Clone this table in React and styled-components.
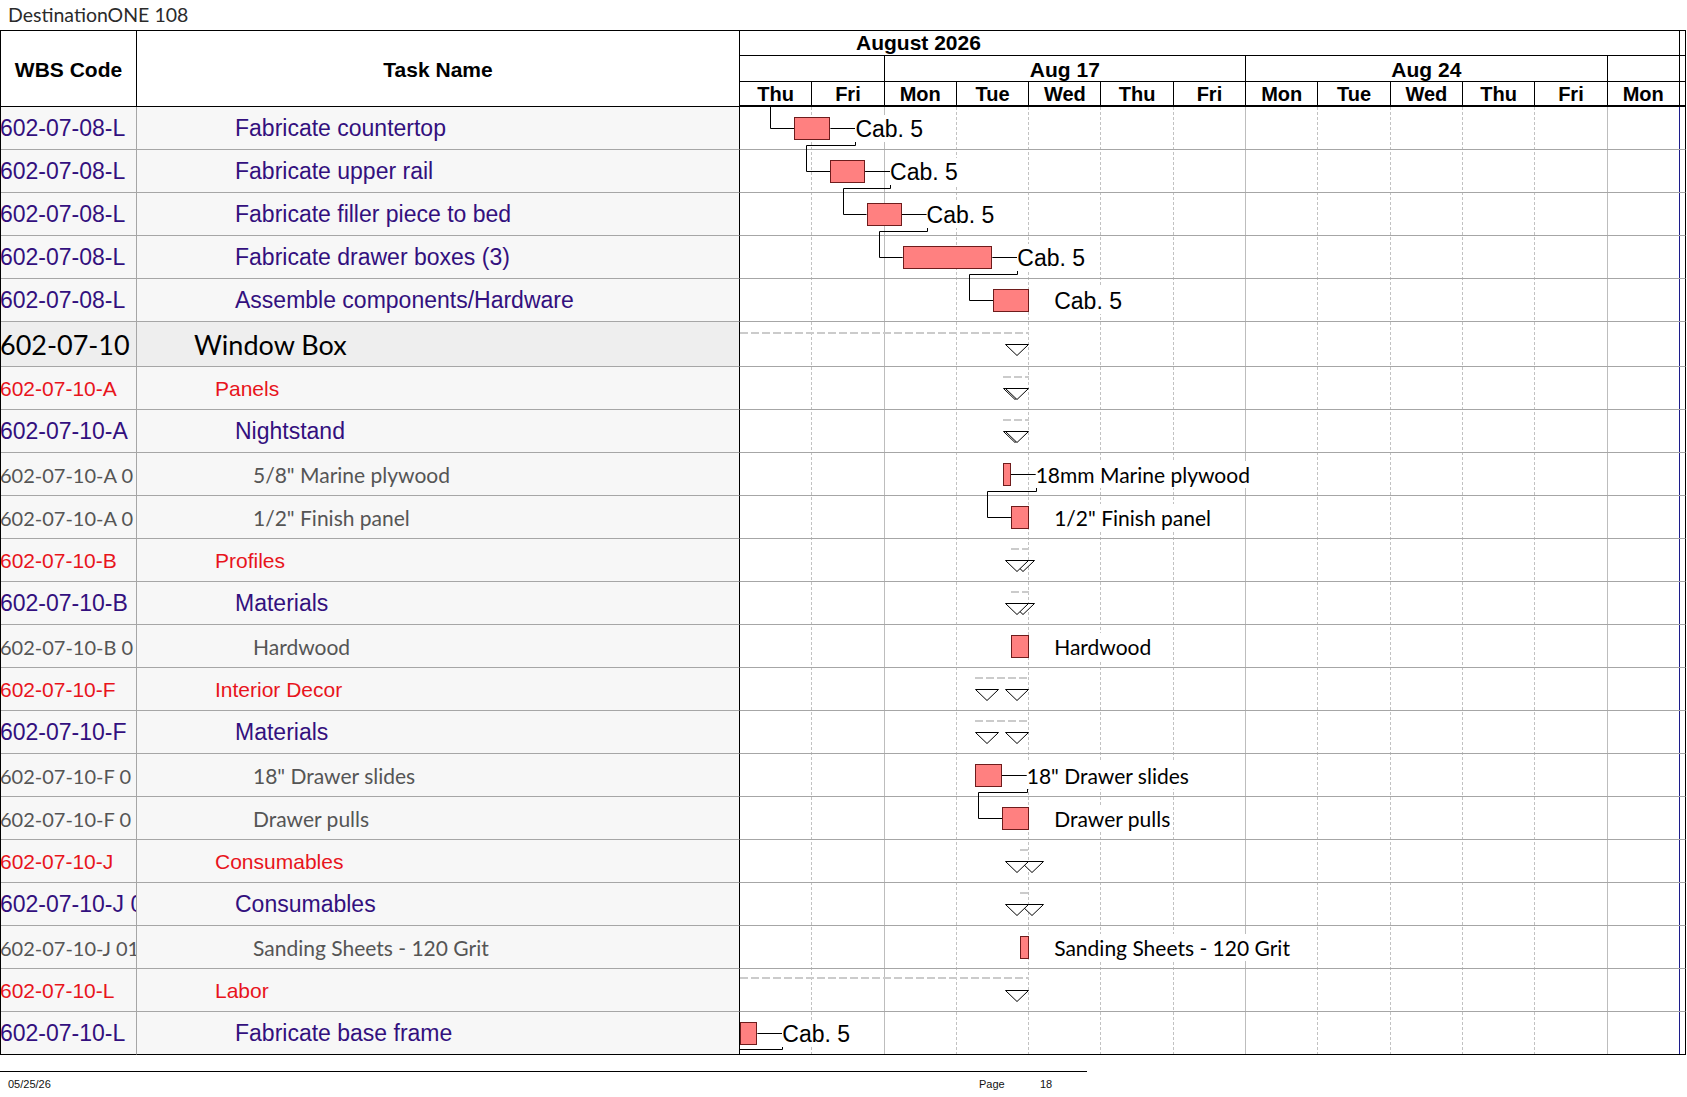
import React from 'react'
import styled, { createGlobalStyle } from 'styled-components'

const DAY = 72.3
const ARIAL = '"Liberation Sans", Arial, sans-serif'
const SOFT = 'Lato, "Open Sans", sans-serif'

const DAYS = ['Thu', 'Fri', 'Mon', 'Tue', 'Wed', 'Thu', 'Fri', 'Mon', 'Tue', 'Wed', 'Thu', 'Fri', 'Mon']
const WEEKS = [
  { label: '', span: 2 },
  { label: 'Aug 17', span: 5 },
  { label: 'Aug 24', span: 5 },
  { label: '', span: 1 },
]

const kinds = {
  top: { font: SOFT, size: 27, wbsSize: 27, color: '#000', indent: 57, bg: '#eeeeee' },
  group: { font: ARIAL, size: 21, wbsSize: 21, color: '#e8141c', indent: 78, bg: '#f7f7f7' },
  task: { font: ARIAL, size: 23, wbsSize: 23, color: '#33107e', indent: 98, bg: '#f7f7f7' },
  item: { font: SOFT, size: 21, wbsSize: 20, color: '#555555', indent: 116, bg: '#f7f7f7' },
}

// bars and summaries are given in days from the first visible day (Thu)
const rows = [
  { wbs: '602-07-08-L', name: 'Fabricate countertop', kind: 'task', bar: [0.75, 1.25], label: 'Cab. 5', link: true, linkIn: 30 },
  { wbs: '602-07-08-L', name: 'Fabricate upper rail', kind: 'task', bar: [1.25, 1.73], label: 'Cab. 5', link: true },
  { wbs: '602-07-08-L', name: 'Fabricate filler piece to bed', kind: 'task', bar: [1.75, 2.235], label: 'Cab. 5', link: true },
  { wbs: '602-07-08-L', name: 'Fabricate drawer boxes (3)', kind: 'task', bar: [2.25, 3.49], label: 'Cab. 5', link: true },
  { wbs: '602-07-08-L', name: 'Assemble components/Hardware', kind: 'task', bar: [3.5, 4], label: 'Cab. 5' },
  { wbs: '602-07-10', name: 'Window Box', kind: 'top', h: 45, sum: [null, 4], sumTop: 10 },
  { wbs: '602-07-10-A', name: 'Panels', kind: 'group', sum: [3.633, 4] },
  { wbs: '602-07-10-A', name: 'Nightstand', kind: 'task', sum: [3.633, 4] },
  { wbs: '602-07-10-A 0', name: '5/8" Marine plywood', kind: 'item', bar: [3.633, 3.744], label: '18mm Marine plywood', link: true },
  { wbs: '602-07-10-A 0', name: '1/2" Finish panel', kind: 'item', bar: [3.75, 4], label: '1/2" Finish panel' },
  { wbs: '602-07-10-B', name: 'Profiles', kind: 'group', sum: [3.75, 4] },
  { wbs: '602-07-10-B', name: 'Materials', kind: 'task', sum: [3.75, 4] },
  { wbs: '602-07-10-B 0', name: 'Hardwood', kind: 'item', bar: [3.75, 4], label: 'Hardwood' },
  { wbs: '602-07-10-F', name: 'Interior Decor', kind: 'group', sum: [3.25, 4] },
  { wbs: '602-07-10-F', name: 'Materials', kind: 'task', sum: [3.25, 4] },
  { wbs: '602-07-10-F 0', name: '18" Drawer slides', kind: 'item', bar: [3.25, 3.62], label: '18" Drawer slides', link: true },
  { wbs: '602-07-10-F 0', name: 'Drawer pulls', kind: 'item', bar: [3.625, 4], label: 'Drawer pulls' },
  { wbs: '602-07-10-J', name: 'Consumables', kind: 'group', sum: [3.875, 4] },
  { wbs: '602-07-10-J 0', name: 'Consumables', kind: 'task', sum: [3.875, 4] },
  { wbs: '602-07-10-J 01', name: 'Sanding Sheets - 120 Grit', kind: 'item', bar: [3.875, 4], label: 'Sanding Sheets - 120 Grit' },
  { wbs: '602-07-10-L', name: 'Labor', kind: 'group', sum: [null, 4], sumTop: 8 },
  { wbs: '602-07-10-L', name: 'Fabricate base frame', kind: 'task', bar: [0, 0.24], label: 'Cab. 5', tail: true },
]

const GlobalStyle = createGlobalStyle`
  html, body {
    margin: 0;
    padding: 0;
    background: #fff;
  }
  body {
    font-family: ${ARIAL};
    color: #000;
  }
`

const Page = styled.div`
  width: 1687px;
`

const Title = styled.div`
  height: 30px;
  line-height: 30px;
  padding-left: 8px;
  font-family: ${SOFT};
  font-size: 19.5px;
  color: #2b2b2b;
`

const Sheet = styled.div`
  width: 1686px;
  box-sizing: border-box;
  border-top: 1px solid #000;
  border-left: 1px solid #000;
`

const HeaderRow = styled.div`
  display: grid;
  grid-template-columns: 136px 603px 946px;
  height: 76px;
`

const HeadCell = styled.div`
  display: flex;
  align-items: center;
  justify-content: center;
  box-sizing: border-box;
  border-right: 1px solid #000;
  border-bottom: 1px solid #000;
  font-weight: bold;
  font-size: 21px;
  padding-top: 2px;
`

const TimeHead = styled.div`
  display: flex;
  flex-direction: column;
  box-sizing: border-box;
  border-right: 1px solid #000;
`

const MonthRow = styled.div`
  height: 25px;
  box-sizing: border-box;
  border-bottom: 1px solid #000;
  display: flex;
`

const MonthCell = styled.div`
  width: ${13 * DAY}px;
  box-sizing: border-box;
  border-right: 1px solid #000;
  padding-left: 116px;
  font-weight: bold;
  font-size: 21px;
  line-height: 24px;
`

const ScaleRow = styled.div`
  height: ${p => p.$h}px;
  box-sizing: border-box;
  border-bottom: ${p => p.$bottom}px solid #000;
  display: flex;
`

const ScaleCell = styled.div`
  flex: none;
  box-sizing: border-box;
  border-right: 1px solid #000;
  display: flex;
  align-items: center;
  justify-content: center;
  font-weight: bold;
  font-size: ${p => p.$size}px;
  line-height: 1;
  padding-top: 1px;
`

const Body = styled.div`
  position: relative;
`

const GridLayer = styled.div`
  position: absolute;
  top: 0;
  bottom: 0;
  left: 739px;
  width: 946px;
  display: flex;
  pointer-events: none;
`

const DayLine = styled.div`
  flex: none;
  width: ${DAY}px;
  box-sizing: border-box;
  border-right: 1px ${p => (p.$type === 'dash' ? 'dashed #c2c2c2' : p.$type === 'today' ? 'solid #1c1c8a' : 'solid #bdbdbd')};
`

const Row = styled.div`
  display: grid;
  grid-template-columns: 136px 603px 946px;
  height: ${p => p.$h}px;
  &:last-child > div {
    border-bottom-color: #000;
  }
`

const TextCell = styled.div`
  display: flex;
  align-items: center;
  box-sizing: border-box;
  overflow: hidden;
  white-space: nowrap;
  background: ${p => kinds[p.$kind].bg};
  border-bottom: 1px solid #a6a6a6;
  border-right: 1px solid ${p => (p.$edge ? '#000' : '#a6a6a6')};
  color: ${p => kinds[p.$kind].color};
  font-family: ${p => kinds[p.$kind].font};
  font-size: ${p => (p.$wbs ? kinds[p.$kind].wbsSize : kinds[p.$kind].size)}px;
  padding-left: ${p => (p.$wbs ? 0 : kinds[p.$kind].indent)}px;
  padding-top: 1px;
`

const Code = styled.span`
  margin-left: -1px;
`

const ChartCell = styled.div`
  position: relative;
  box-sizing: border-box;
  border-bottom: 1px solid #a6a6a6;
  border-right: 1px solid #000;
`

const Bar = styled.div`
  position: absolute;
  top: 10px;
  height: 23px;
  box-sizing: border-box;
  background: #ff8080;
  border: 1px solid #6e1c1c;
  z-index: 2;
`

const Label = styled.span`
  position: absolute;
  top: 8px;
  height: 27px;
  line-height: 28px;
  padding-right: 3px;
  background: #fff;
  white-space: nowrap;
  z-index: 3;
  color: #000;
  font-family: ${p => (p.$kind === 'item' ? SOFT : ARIAL)};
  font-size: ${p => (p.$kind === 'item' ? 21 : 23)}px;
`

const Links = styled.svg`
  position: absolute;
  left: 0;
  top: 0;
  width: 1px;
  height: 1px;
  overflow: visible;
  z-index: 1;
`

const SumLine = styled.div`
  position: absolute;
  top: ${p => p.$top}px;
  height: 2px;
  background-image: linear-gradient(to right, #cbcbcb 0 8px, transparent 8px 11px);
  background-size: 11px 2px;
`

const Marker = styled.svg`
  position: absolute;
  top: ${p => p.$top}px;
  width: 24px;
  height: 12px;
  overflow: visible;
`

const Footer = styled.div`
  margin-top: 16px;
  width: 1087px;
  border-top: 1px solid #000;
  display: grid;
  grid-template-columns: 979px 61px auto;
  padding-top: 6px;
  font-family: ${ARIAL};
  font-size: 11px;
  line-height: 13px;
  color: #111;
`

const FootDate = styled.span`
  padding-left: 8px;
`

const px = d => d * DAY
const crisp = v => Math.round(v) + 0.5

function Triangle({ left, top }) {
  return (
    <Marker $top={top} style={{ left }} viewBox="0 0 24 12">
      <path d="M0.5 0.5 H23.5 L12 11.5 Z" fill="#fff" stroke="#000" strokeWidth="1" />
    </Marker>
  )
}

function Summary({ sum, top }) {
  const start = sum[0] === null ? 0 : px(sum[0])
  const end = px(sum[1])
  const mTop = top === 10 ? 22 : 21
  return (
    <>
      <SumLine $top={top} style={{ left: start, width: end - start }} />
      {sum[0] !== null && <Triangle left={start} top={mTop} />}
      <Triangle left={end - 24} top={mTop} />
    </>
  )
}

function ChartContent({ row, next }) {
  const h = row.h || 43
  const out = []
  if (row.sum) out.push(<Summary key="s" sum={row.sum} top={row.sumTop || 9} />)
  if (row.bar) {
    const s = px(row.bar[0])
    const e = px(row.bar[1])
    const lx = e + 25
    const cy = 21.5
    let d = ''
    if (row.linkIn) d += `M${crisp(row.linkIn)} 0 V${cy} H${s}`
    if (row.link || row.tail) d += ` M${e} ${cy} H${lx}`
    if (row.link && next) {
      const ns = px(next.bar[0])
      d += ` M${crisp(lx)} ${cy} V${38.5} H${crisp(ns - 24)} V${h + cy} H${ns}`
    }
    if (row.tail) d += ` M${crisp(lx)} ${cy} V${37.5} H0`
    out.push(
      <Links key="l">
        <path d={d} fill="none" stroke="#000" strokeWidth="1" />
      </Links>
    )
    out.push(<Bar key="b" style={{ left: s, width: e - s }} />)
    out.push(
      <Label key="t" $kind={row.kind} style={{ left: lx }}>
        {row.label}
      </Label>
    )
  }
  return out
}

export default function App() {
  return (
    <Page>
      <GlobalStyle />
      <Title>DestinationONE 108</Title>
      <Sheet>
        <HeaderRow>
          <HeadCell>WBS Code</HeadCell>
          <HeadCell>Task Name</HeadCell>
          <TimeHead>
            <MonthRow>
              <MonthCell>August 2026</MonthCell>
            </MonthRow>
            <ScaleRow $h={26} $bottom={1}>
              {WEEKS.map((w, i) => (
                <ScaleCell key={i} $size={21} style={{ width: w.span * DAY }}>
                  {w.label}
                </ScaleCell>
              ))}
            </ScaleRow>
            <ScaleRow $h={25} $bottom={2}>
              {DAYS.map((d, i) => (
                <ScaleCell key={i} $size={20} style={{ width: DAY }}>
                  {d}
                </ScaleCell>
              ))}
            </ScaleRow>
          </TimeHead>
        </HeaderRow>
        <Body>
          <GridLayer>
            {DAYS.map((d, i) => (
              <DayLine
                key={i}
                $type={i === 12 ? 'today' : DAYS[i + 1] === 'Mon' ? 'week' : 'dash'}
              />
            ))}
          </GridLayer>
          {rows.map((row, i) => (
            <Row key={i} $h={row.h || 43}>
              <TextCell $kind={row.kind} $wbs>
                <Code>{row.wbs}</Code>
              </TextCell>
              <TextCell $kind={row.kind} $edge>
                {row.name}
              </TextCell>
              <ChartCell>
                <ChartContent row={row} next={rows[i + 1]} />
              </ChartCell>
            </Row>
          ))}
        </Body>
      </Sheet>
      <Footer>
        <FootDate>05/25/26</FootDate>
        <span>Page</span>
        <span>18</span>
      </Footer>
    </Page>
  )
}
